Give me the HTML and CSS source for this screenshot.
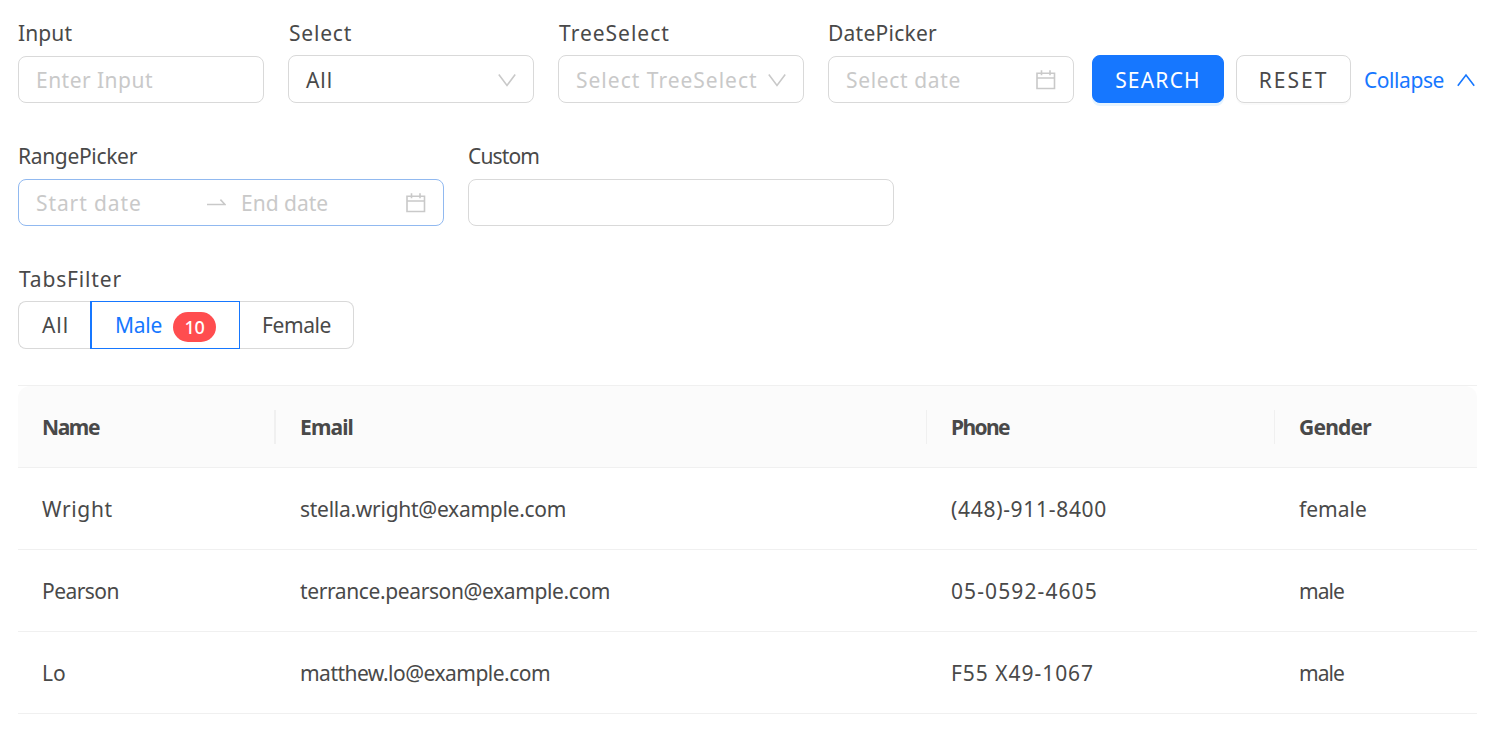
FILE: index.html
```html
<!DOCTYPE html>
<html lang="en">
<head>
<meta charset="utf-8">
<title>Query table</title>
<link rel="stylesheet" href="styles.css">
</head>
<body>
<main class="page">
  <form class="filters">
    <div class="row">
      <div class="field"><label class="label">Input</label><div class="control short"><span class="placeholder ph-input">Enter Input</span></div></div>
      <div class="field"><label class="label l-select">Select</label><div class="control select"><span class="t-all">All</span><svg class="icon chevron" viewBox="0 0 18 14"><path d="M.8 1.5 9 12.4 17.2 1.5"/></svg></div></div>
      <div class="field"><label class="label l-tree">TreeSelect</label><div class="control select"><span class="placeholder ph-tree">Select TreeSelect</span><svg class="icon chevron" viewBox="0 0 18 14"><path d="M.8 1.5 9 12.4 17.2 1.5"/></svg></div></div>
      <div class="field"><label class="label l-date">DatePicker</label><div class="control short"><span class="placeholder ph-date">Select date</span><svg class="icon calendar" viewBox="0 0 20 20"><path d="M1 3.2h17.5v15.3H1zM1 8h17.5M5.5.3v5M14 .3v5"/></svg></div></div>
      <div class="actions">
        <button type="button" class="btn primary">SEARCH</button>
        <button type="button" class="btn reset">RESET</button>
        <a class="collapse">Collapse<svg class="icon-up" viewBox="0 0 18 14"><path d="M.8 12.8 9 2l8.2 10.8"/></svg></a>
      </div>
    </div>
    <div class="row">
      <div class="field wide"><label class="label l-range">RangePicker</label><div class="control short focused"><span class="placeholder start">Start date</span><svg class="arrow" viewBox="0 0 19 8"><path d="M0 5.5h18L13.4.6"/></svg><span class="placeholder">End date</span><svg class="icon calendar" viewBox="0 0 20 20"><path d="M1 3.2h17.5v15.3H1zM1 8h17.5M5.5.3v5M14 .3v5"/></svg></div></div>
      <div class="field wide"><label class="label l-custom">Custom</label><div class="control short"></div></div>
    </div>
    <div class="row">
      <div class="field"><label class="label l-tabs">TabsFilter</label>
        <div class="tabs">
          <div class="tab tab-all">All</div>
          <div class="tab tab-male">Male<span class="badge">10</span></div>
          <div class="tab tab-female">Female</div>
        </div>
      </div>
    </div>
  </form>
  <table class="table">
    <colgroup><col class="c1"><col class="c2"><col class="c3"><col class="c4"></colgroup>
    <thead><tr><th class="h-name">Name</th><th class="h-email">Email</th><th class="h-phone">Phone</th><th class="h-gender">Gender</th></tr></thead>
    <tbody>
      <tr><td class="n-wright">Wright</td><td class="e-stella">stella.wright@example.com</td><td class="p-first">(448)-911-8400</td><td>female</td></tr>
      <tr><td class="n-pearson">Pearson</td><td class="e-terrance">terrance.pearson@example.com</td><td class="p-second">05-0592-4605</td><td class="g-male">male</td></tr>
      <tr><td>Lo</td><td class="e-matthew">matthew.lo@example.com</td><td class="p-third">F55 X49-1067</td><td class="g-male">male</td></tr>
    </tbody>
  </table>
</main>
</body>
</html>
```
FILE: styles.css
```css
*{box-sizing:border-box}
body{margin:0;background:#fff;color:#494949;font:21px/32px "Noto Sans",sans-serif}
.page{width:1477px;padding:17px 0 0 18px}
.row{display:flex;gap:24px;height:123px}
.field{flex:none;width:246px}
.field.wide{width:426px}
.label{display:block;height:38px;letter-spacing:.1px}
.control{display:flex;align-items:center;height:48px;padding:0 17px;border:1px solid #d9d9d9;border-radius:8px;white-space:nowrap}
.control.select{padding-top:1px}
.control.short{height:47px;margin-top:1px}
.control.focused{border-color:#91b9f0}
.placeholder{color:#c9c9c9}
svg{fill:none;stroke:#c9c9c9;stroke-width:1.6;flex:none}
.icon{margin-left:auto}
.chevron{width:18px;height:14px}
.calendar{width:20px;height:20px}
.arrow{width:19px;height:8px;margin-right:15px}
.start{width:171px;letter-spacing:.9px}
.actions{display:flex;flex:none;align-items:center;height:48px;margin:38px 0 0 -6px}
.btn{height:48px;border:1px solid #d9d9d9;border-radius:8px;padding:2px 0 0;background:#fff;color:#494949;font:inherit;box-shadow:0 2px 0 #00000005}
.primary{width:132px;margin-right:12px;background:#1677ff;border-color:#1677ff;color:#fff;letter-spacing:1.2px;box-shadow:0 3px 0 #e6f4ff}
.reset{width:115px;margin-right:13px;letter-spacing:2px}
.collapse{display:flex;align-items:center;padding-top:1px;color:#1677ff;white-space:nowrap;letter-spacing:-.43px}
.icon-up{width:18px;height:14px;margin-left:13px;stroke:#1677ff}
.tabs{display:flex;width:336px;height:48px}
.tab{display:flex;align-items:center;border:1px solid #d9d9d9;white-space:nowrap}
.tab-all{width:72px;padding-left:23px;border-right:0;border-radius:8px 0 0 8px;letter-spacing:.9px}
.tab-male{width:150px;padding-left:23px;border-color:#1677ff;border-left-width:2px;color:#1677ff;letter-spacing:-.27px}
.badge{display:flex;align-items:center;justify-content:center;width:43px;height:30px;margin:3px 0 0 11px;border-radius:15px;background:#ff4d4f;color:#fff;font-size:18px;font-weight:500}
.tab-female{width:114px;padding-left:22px;border-left:0;border-radius:0 8px 8px 0;letter-spacing:-.4px}

.table{width:1459px;margin-top:-1px;border-top:1px solid #f0f0f0;border-collapse:separate;border-spacing:0;table-layout:fixed}
.c1{width:258px}
.c2{width:651px}
.c3{width:348px}
.c4{width:202px}
th,td{height:82px;padding:0 24px;text-align:left;border-bottom:1px solid #f0f0f0}
th{background:linear-gradient(#f0f0f0,#f0f0f0) right center/1px 34px no-repeat #fbfbfb}
th:first-child{border-top-left-radius:12px;background-size:2px 34px}
th:last-child{border-top-right-radius:12px;background-image:none}

/* Tracking per text */
.l-select{letter-spacing:.8px;padding-left:1px}
.l-tree{letter-spacing:1px;padding-left:1px}
.l-date{letter-spacing:.25px}
.l-range{letter-spacing:-.32px}
.l-custom{letter-spacing:-.87px}
.l-tabs{letter-spacing:.84px;padding-left:1px}
.ph-input{letter-spacing:.47px}
.ph-tree{letter-spacing:1px}
.ph-date{letter-spacing:.65px}
.t-all{letter-spacing:.9px}
.h-name{letter-spacing:-1.4px}
.h-email{letter-spacing:-.87px}
.h-phone{letter-spacing:-1.6px}
.h-gender{letter-spacing:-.77px}
.n-wright{letter-spacing:.65px}
.n-pearson{letter-spacing:-.54px}
.e-stella{letter-spacing:-.27px}
.e-terrance{letter-spacing:-.38px}
.e-matthew{letter-spacing:-.52px}
.p-first{letter-spacing:.7px}
.p-second{letter-spacing:1.1px}
.p-third{letter-spacing:.96px}
.g-male{letter-spacing:-.92px}
```
